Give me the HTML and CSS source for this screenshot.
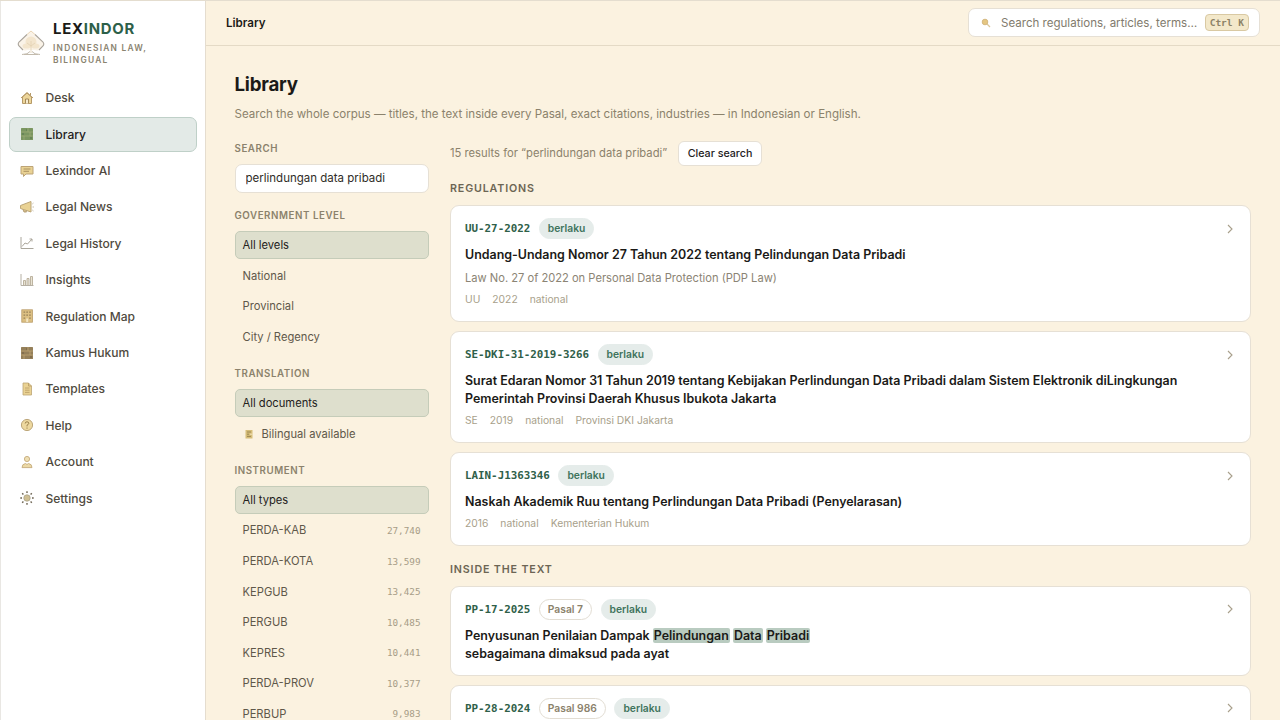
FILE: index.html
```html
<!DOCTYPE html>
<html lang="en">

<head>
  <meta charset="utf-8" />
  <meta name="viewport" content="width=device-width, initial-scale=1" />
  <title>Library - Lexindor</title>
  <link rel="stylesheet" href="styles.css">
</head>

<body>
  <div class="app">
    <aside class="sidebar">
      <a class="brand" href="#">
        <svg class="brand-logo" viewBox="0 0 28 26">
          <path d="M14 1 L26 12 Q27.5 14 26 16 L22 20 Q20 21 18 20 H10 Q8 21 6 20 L2 16 Q.5 14 2 12 Z" fill="#faf3e8" />
          <path d="M10 4.5 L2 12 Q.5 14 2 16 L6 20 M18 4.5 L26 12 Q27.5 14 26 16 L22 20" fill="none" stroke="#aaa49b" stroke-width="1.1" />
          <path d="M10 4.5 L14 1 L18 4.5" fill="none" stroke="#ead5b5" />
          <circle cx="14" cy="12" r="5.5" fill="#f3e5cd" />
          <ellipse cx="9.5" cy="16" rx="4" ry="2.6" fill="#f3e5cd" />
          <ellipse cx="18.5" cy="16" rx="4" ry="2.6" fill="#f3e5cd" />
          <path d="M14 11 V23 M14 16 L10 13 M14 16 L18 13" stroke="#e3d2b2" stroke-width=".8" fill="none" />
          <path d="M5 24.5 Q11 24.5 13 21.5 M23 24.5 Q17 24.5 15 21.5 M7 24.5 H21" fill="none" stroke="#c3bbad" />
        </svg>
        <div>
          <div class="brand-name">LEX<span>INDOR</span></div>
          <div class="brand-tag">Indonesian law, bilingual</div>
        </div>
      </a>
      <nav class="nav">
        <a class="nav-item" href="#">
          <svg viewBox="0 0 14 14" class="icon"><path d="M2.5 6 V12.5 H11.5 V6 L7 2 Z" fill="#ecd59a" stroke="#b69a68" /><path d="M1 7 L7 1.5 L13 7 M10.5 2 V4.5" fill="none" stroke="#b69a68" /><path d="M5.5 12.5 V8 H8.5 V12.5" fill="#f7ecd0" stroke="#a48858" /></svg>
          Desk
        </a>
        <a class="nav-item active" href="#">
          <svg viewBox="0 0 14 14" class="icon"><rect x="1" y="1" width="12" height="12" rx=".5" fill="#7b9661" /><path d="M1 5 H13 M1 9 H13 M8 1 V5 M10 5 V9 M4 9 V13" stroke="#a0af7a" stroke-width=".7" /><path d="M2 7 H4 M6 3 H7 M10 11 H12" stroke="#577750" /></svg>
          Library
        </a>
        <a class="nav-item" href="#">
          <svg viewBox="0 0 14 14" class="icon"><path d="M1 2.5 H13 V10 H6 L3.5 12.5 V10 H1 Z" fill="#e9d294" stroke="#bda477" /><path d="M3.5 5 H10.5 M3.5 7.3 H9" stroke="#ab9260" /></svg>
          Lexindor AI
        </a>
        <a class="nav-item" href="#">
          <svg viewBox="0 0 14 14" class="icon"><path d="M.5 5.5 L11 1.5 V12 L.5 8.5 Z" fill="#e9d294" stroke="#bca679" /><path d="M3 9.5 L4 12 H6.5 L5.8 10.5" fill="#d3ba83" stroke="#b6a078" /><path d="M12.3 4 L13.5 3 M12.5 7 H14 M12.3 10 L13.5 11" stroke="#c6bda8" /></svg>
          Legal News
        </a>
        <a class="nav-item" href="#">
          <svg viewBox="0 0 14 14" class="icon"><path d="M1 1 V12.5 H13.5" fill="none" stroke="#aaa69c" /><path d="M2 10.5 L5 7 L7.5 8 L12 3 M9.5 3 H12 V5.5" fill="none" stroke="#aaa59a" /></svg>
          Legal History
        </a>
        <a class="nav-item" href="#">
          <svg viewBox="0 0 14 14" class="icon"><path d="M1 1 V12.5 H13.5" fill="none" stroke="#b6b0a4" /><path d="M3.5 12 V7.5 H5.5 V12 M7 12 V5.5 H9 V12 M10.5 12 V3.5 H12.5 V12" fill="#e9e3d3" stroke="#b7ad98" stroke-width=".9" /></svg>
          Insights
        </a>
        <a class="nav-item" href="#">
          <svg viewBox="0 0 14 14" class="icon"><rect x="1.8" y=".8" width="10.6" height="12.4" fill="#dcc083" stroke="#b99b67" stroke-width=".8" /><path d="M3.5 3.2 H5.2 M6.3 3.2 H8 M9.1 3.2 H10.8 M3.5 6.2 H5.2 M6.3 6.2 H8 M9.1 6.2 H10.8 M3.5 9.2 H5.2 M9.1 9.2 H10.8" stroke="#99825a" stroke-width="1.3" /><path d="M6.2 13 V9.5 H8.2 V13" fill="#f3e5c2" /></svg>
          Regulation Map
        </a>
        <a class="nav-item" href="#">
          <svg viewBox="0 0 14 14" class="icon"><rect x="1" y="1" width="12" height="12" rx=".5" fill="#95805a" /><path d="M1 5 H13 M1 9 H13 M8 1 V5 M10 5 V9 M4 9 V13" stroke="#c4aa77" stroke-width=".7" /><path d="M2 7 H4 M6 3 H7 M10 11 H12" stroke="#725e42" /></svg>
          Kamus Hukum
        </a>
        <a class="nav-item" href="#">
          <svg viewBox="0 0 14 14" class="icon"><path d="M3 1 H8.5 L11.5 4 V13 H3 Z" fill="#ead293" stroke="#bda574" stroke-width=".8" /><path d="M8.5 1 V4 H11.5 M5 6 H9.5 M5 8.2 H9.5 M5 10.4 H9.5" fill="none" stroke="#b79b64" stroke-width=".8" /></svg>
          Templates
        </a>
        <a class="nav-item" href="#">
          <svg viewBox="0 0 14 14" class="icon"><circle cx="7" cy="7" r="5.6" fill="#edd89f" stroke="#bda77a" /><path d="M5.2 5.5 Q5.2 3.8 7 3.8 Q8.8 3.8 8.8 5.3 Q8.8 6.3 7 7.2 V8.4 M7 9.5 V10.7" fill="none" stroke="#9b814d" /></svg>
          Help
        </a>
        <a class="nav-item" href="#">
          <svg viewBox="0 0 14 14" class="icon"><circle cx="7" cy="4" r="2.6" fill="#efdfb3" stroke="#c5aa7a" stroke-width=".9" /><path d="M2 12.6 Q2 9 5.5 8.5 L7 9.5 L8.5 8.5 Q12 9 12 12.6 Z" fill="#ecd9a6" stroke="#c5aa7a" stroke-width=".9" /></svg>
          Account
        </a>
        <a class="nav-item" href="#">
          <svg viewBox="0 0 14 14" class="icon"><path d="M7 .3 V2 M7 12 V13.7 M.3 7 H2 M12 7 H13.7 M2.2 2.2 L3.4 3.4 M10.6 10.6 L11.8 11.8 M2.2 11.8 L3.4 10.6 M10.6 3.4 L11.8 2.2" stroke="#6c6352" stroke-width="1.4" /><circle cx="7" cy="7" r="3.2" fill="#cfbf93" stroke="#aaa289" stroke-width=".8" /></svg>
          Settings
        </a>
      </nav>
    </aside>

    <div class="main">
      <header class="topbar">
        <div class="crumb">Library</div>
        <div class="quick-search">
          <svg class="search-icon" viewBox="0 0 10 10"><path d="M6 6 L9 9" stroke="#dbc69a" stroke-width="1.2" /><circle cx="4" cy="4" r="2.8" fill="#e5c681" stroke="#d5b981" /></svg>
          <span class="placeholder">Search regulations, articles, terms…</span>
          <kbd>Ctrl K</kbd>
        </div>
      </header>

      <main class="content">
        <h1>Library</h1>
        <p class="lead">Search the whole corpus — titles, the text inside every Pasal, exact citations, industries — in Indonesian or English.</p>

        <div class="columns">
          <div class="filters">
            <section class="filter-group">
              <h2>Search</h2>
              <input class="search-input" type="text" value="perlindungan data pribadi" />
            </section>

            <section class="filter-group">
              <h2>Government level</h2>
              <div class="options">
                <a class="option selected" href="#">All levels</a>
                <a class="option" href="#">National</a>
                <a class="option" href="#">Provincial</a>
                <a class="option" href="#">City / Regency</a>
              </div>
            </section>

            <section class="filter-group">
              <h2>Translation</h2>
              <div class="options">
                <a class="option selected" href="#">All documents</a>
                <a class="option" href="#">
                  <svg class="doc-icon" viewBox="0 0 12 12"><rect x="2.5" y="2" width="7" height="8.5" fill="#d6bd78" /><path d="M4 4 H8 M4 6.2 H6 M4 8.4 H8" stroke="#9b8850" /><path d="M7 6.2 H9.5" stroke="#f1e3bb" /></svg>
                  Bilingual available
                </a>
              </div>
            </section>

            <section class="filter-group">
              <h2>Instrument</h2>
              <div class="options">
                <a class="option selected" href="#">All types</a>
                <a class="option" href="#">PERDA-KAB <span class="count">27,740</span></a>
                <a class="option" href="#">PERDA-KOTA <span class="count">13,599</span></a>
                <a class="option" href="#">KEPGUB <span class="count">13,425</span></a>
                <a class="option" href="#">PERGUB <span class="count">10,485</span></a>
                <a class="option" href="#">KEPRES <span class="count">10,441</span></a>
                <a class="option" href="#">PERDA-PROV <span class="count">10,377</span></a>
                <a class="option" href="#">PERBUP <span class="count">9,983</span></a>
              </div>
            </section>
          </div>

          <div class="results">
            <div class="summary">
              <span>15 results for “perlindungan data pribadi”</span>
              <button class="clear">Clear search</button>
            </div>

            <h2 class="results-title">Regulations</h2>
            <div class="cards">
              <a class="card" href="#">
                <div class="card-head">
                  <span class="code">UU-27-2022</span>
                  <span class="pill">berlaku</span>
                  <svg class="chevron" viewBox="0 0 10 10"><path d="M3 1 L7 5 L3 9" /></svg>
                </div>
                <div class="title">Undang-Undang Nomor 27 Tahun 2022 tentang Pelindungan Data Pribadi</div>
                <div class="subtitle">Law No. 27 of 2022 on Personal Data Protection (PDP Law)</div>
                <div class="meta"><span>UU</span><span>2022</span><span>national</span></div>
              </a>
              <a class="card" href="#">
                <div class="card-head">
                  <span class="code">SE-DKI-31-2019-3266</span>
                  <span class="pill">berlaku</span>
                  <svg class="chevron" viewBox="0 0 10 10"><path d="M3 1 L7 5 L3 9" /></svg>
                </div>
                <div class="title">Surat Edaran Nomor 31 Tahun 2019 tentang Kebijakan Perlindungan Data Pribadi dalam Sistem Elektronik diLingkungan Pemerintah Provinsi Daerah Khusus Ibukota Jakarta</div>
                <div class="meta"><span>SE</span><span>2019</span><span>national</span><span>Provinsi DKI Jakarta</span></div>
              </a>
              <a class="card" href="#">
                <div class="card-head">
                  <span class="code">LAIN-J1363346</span>
                  <span class="pill">berlaku</span>
                  <svg class="chevron" viewBox="0 0 10 10"><path d="M3 1 L7 5 L3 9" /></svg>
                </div>
                <div class="title">Naskah Akademik Ruu tentang Perlindungan Data Pribadi (Penyelarasan)</div>
                <div class="meta"><span>2016</span><span>national</span><span>Kementerian Hukum</span></div>
              </a>
            </div>

            <h2 class="results-title">Inside the text</h2>
            <div class="cards">
              <a class="card passage" href="#">
                <div class="card-head">
                  <span class="code">PP-17-2025</span>
                  <span class="pill outline">Pasal 7</span>
                  <span class="pill">berlaku</span>
                  <svg class="chevron" viewBox="0 0 10 10"><path d="M3 1 L7 5 L3 9" /></svg>
                </div>
                <div class="title">Penyusunan Penilaian Dampak <mark>Pelindungan</mark> <mark>Data</mark> <mark>Pribadi</mark><br />sebagaimana dimaksud pada ayat</div>
              </a>
              <a class="card passage" href="#">
                <div class="card-head">
                  <span class="code">PP-28-2024</span>
                  <span class="pill outline">Pasal 986</span>
                  <span class="pill">berlaku</span>
                  <svg class="chevron" viewBox="0 0 10 10"><path d="M3 1 L7 5 L3 9" /></svg>
                </div>
                <div class="title"></div>
              </a>
            </div>
          </div>
        </div>
      </main>
    </div>
  </div>
</body>

</html>
```

FILE: styles.css
```css
* {
  box-sizing: border-box;
}

body {
  margin: 0;
  height: 720px;
  overflow: hidden;
  font-family: Inter, sans-serif;
  font-size: 12px;
  color: #1b1a17;
  background: #fbf2e0;
}

a {
  color: inherit;
  text-decoration: none;
}

h1,
h2,
p {
  margin: 0;
}

.app {
  display: flex;
  height: 720px;
  border-top: 1px solid #e4ddcf;
}

/* sidebar */
.sidebar {
  width: 206px;
  flex: none;
  padding: 18px 8.5px 0 8px;
  background: #fff;
  border-left: 1px solid #e9e7e3;
  border-right: 1px solid #e5ddcf;
}

.brand {
  display: flex;
  align-items: center;
  gap: 8px;
  padding-left: 8px;
  margin-bottom: 14px;
}

.brand-logo {
  width: 28px;
  height: 26px;
  flex: none;
}

.brand-name {
  font-size: 14.9px;
  line-height: 20px;
  font-weight: 700;
  letter-spacing: 0.75px;
}

.brand-name span {
  color: #2d6049;
}

.brand-tag {
  width: 110px;
  margin-top: 2.5px;
  font-size: 8.4px;
  line-height: 12.4px;
  font-weight: 600;
  letter-spacing: 1.23px;
  text-transform: uppercase;
  color: #8a8370;
}

.nav {
  display: flex;
  flex-direction: column;
  gap: 1.4px;
}

.nav-item {
  display: flex;
  align-items: center;
  gap: 11.5px;
  height: 35px;
  padding-left: 10px;
  border: 1px solid transparent;
  border-radius: 7px;
  font-size: 12.05px;
  font-weight: 500;
  color: #4f4a3e;
}

.nav-item.active {
  background: #e3eae7;
  border-color: #bfd0c8;
  color: #23211c;
}

.icon {
  width: 14px;
  height: 14px;
}

/* top bar */
.main {
  flex: 1;
  min-width: 0;
}

.topbar {
  display: flex;
  align-items: center;
  justify-content: space-between;
  height: 45px;
  padding: 0 20px 1px;
  border-bottom: 1px solid #e4dac6;
}

.crumb {
  font-size: 11.6px;
  font-weight: 600;
}

.quick-search {
  display: flex;
  align-items: center;
  width: 292px;
  height: 29px;
  padding: 0 10px 0 12px;
  background: #fff;
  border: 1px solid #e6e0d5;
  border-radius: 7px;
}

.search-icon {
  width: 10px;
  height: 10px;
  margin-right: 10px;
}

.placeholder {
  flex: 1;
  font-size: 11.55px;
  white-space: nowrap;
  color: #827b6d;
}

kbd {
  height: 17px;
  padding: 0 4px;
  font-family: "DejaVu Sans Mono", monospace;
  font-size: 9.5px;
  line-height: 15px;
  font-weight: 600;
  white-space: nowrap;
  color: #8c8266;
  background: #f3e8ca;
  border: 1px solid #d9c9a3;
  border-radius: 4px;
}

/* page */
.content {
  padding: 27px 29px 0 28.5px;
}

h1 {
  font-size: 18.7px;
  line-height: 24px;
  font-weight: 700;
  letter-spacing: -0.2px;
}

.lead {
  margin-top: 7.5px;
  line-height: 18px;
  font-size: 11.55px;
  color: #8b826c;
}

.columns {
  display: flex;
  gap: 21.5px;
  margin-top: 18px;
}

.filters {
  width: 194px;
  flex: none;
}

.filter-group {
  margin-bottom: 15.3px;
}

.filter-group h2 {
  font-size: 9.75px;
  line-height: 16px;
  font-weight: 600;
  letter-spacing: 0.55px;
  text-transform: uppercase;
  color: #8b826c;
}

.search-input {
  display: block;
  width: 100%;
  height: 29.5px;
  margin-top: 7px;
  padding: 0 10px;
  font-family: inherit;
  font-size: 11.5px;
  color: #302d27;
  background: #fff;
  border: 1px solid #e6e0d5;
  border-radius: 7px;
}

.options {
  display: flex;
  flex-direction: column;
  gap: 2px;
  margin-top: 6.5px;
}

.option {
  display: flex;
  align-items: center;
  height: 28.55px;
  padding: 0 7px;
  border: 1px solid transparent;
  border-radius: 5px;
  font-size: 11.2px;
  color: #5f584a;
}

.option.selected {
  background: #dedfcd;
  border-color: #c5ccb9;
  color: #23211c;
}

.doc-icon {
  width: 12px;
  height: 12px;
  margin-right: 7px;
}

.count {
  margin-left: auto;
  font-family: "DejaVu Sans Mono", monospace;
  font-size: 9.3px;
  color: #a79d87;
}

/* results */
.results {
  flex: 1;
  min-width: 0;
}

.summary {
  display: flex;
  align-items: center;
  gap: 11px;
  height: 25px;
  color: #8b826c;
  font-size: 11.23px;
}

.clear {
  height: 25px;
  padding: 0 8.5px;
  font-family: inherit;
  font-size: 10.7px;
  font-weight: 500;
  color: #23211c;
  background: #fff;
  border: 1px solid #e6e0d5;
  border-radius: 6px;
}

.results-title {
  margin: 15.5px 0 8px;
  font-size: 10.7px;
  line-height: 16px;
  font-weight: 600;
  letter-spacing: 0.85px;
  text-transform: uppercase;
  color: #6c6554;
}

.cards {
  display: flex;
  flex-direction: column;
  gap: 9px;
}

.card {
  display: block;
  padding: 12px 14px 14px;
  background: #fff;
  border: 1px solid #e6e0d5;
  border-radius: 9px;
}

.card-head {
  display: flex;
  align-items: center;
  height: 21px;
}

.code {
  font-family: "DejaVu Sans Mono", monospace;
  font-size: 10.85px;
  font-weight: 600;
  color: #2f6049;
}

.pill {
  height: 21px;
  margin-left: 8.5px;
  padding: 0 8px;
  font-size: 10.3px;
  line-height: 19px;
  font-weight: 600;
  color: #3f745d;
  background: #e5ecea;
  border: 1px solid #e5ecea;
  border-radius: 11px;
}

.pill.outline {
  color: #8b826c;
  background: #fff;
  border-color: #e2ddd3;
}

.chevron {
  width: 10px;
  height: 10px;
  margin-left: auto;
  margin-right: 1px;
  fill: none;
  stroke: #a89f8b;
  stroke-width: 1.1;
}

.title {
  margin-top: 7px;
  font-size: 12.45px;
  line-height: 18px;
  font-weight: 600;
}

.subtitle {
  margin-top: 6px;
  font-size: 11.15px;
  line-height: 17px;
  color: #8b8474;
}

.meta {
  display: flex;
  gap: 12px;
  margin-top: 5px;
  font-size: 10.3px;
  line-height: 15px;
  color: #a89f8b;
}

.passage {
  padding-bottom: 12px;
}

mark {
  padding: 0 1px;
  color: inherit;
  background: #b9cbc0;
  border-radius: 2px;
}
```
